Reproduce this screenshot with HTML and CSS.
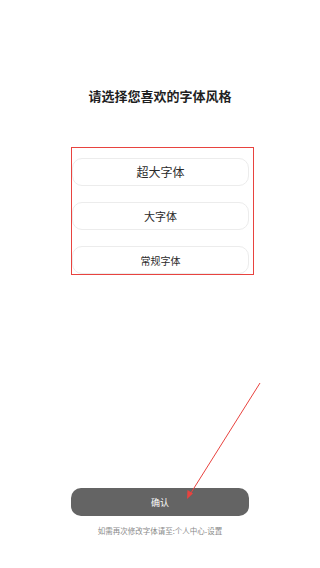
FILE: index.html
```html
<!DOCTYPE html>
<html lang="zh-CN">
<head>
    <meta charset="UTF-8">
    <meta name="viewport" content="width=device-width, initial-scale=1.0">
    <title>字体风格</title>
    <link rel="stylesheet" href="styles.css">
</head>
<body>
    <div class="page">
        <h1 class="title">请选择您喜欢的字体风格</h1>

        <div class="options">
            <button class="option option-xl">超大字体</button>
            <button class="option option-lg">大字体</button>
            <button class="option option-md">常规字体</button>
        </div>

        <button class="confirm">确认</button>
        <p class="tip">如需再次修改字体请至:个人中心-设置</p>

        <!-- annotation arrow -->
        <svg class="arrow" width="320" height="568" viewBox="0 0 320 568">
            <line x1="260" y1="383" x2="189" y2="496" stroke="#e8433f" stroke-width="1"/>
            <polygon points="187,499 187.5,490 193,493.5" fill="#e8433f"/>
        </svg>
    </div>
</body>
</html>
```

FILE: styles.css
```css
* {
    margin: 0;
    padding: 0;
    box-sizing: border-box;
    font-family: "Noto Sans", "Noto Sans CJK SC", sans-serif;
}

body {
    background-color: #ffffff;
}

.page {
    position: relative;
    width: 320px;
    height: 568px;
    display: flex;
    flex-direction: column;
}

.title {
    margin-top: 86px;
    font-size: 13px;
    line-height: 20px;
    font-weight: 600;
    color: #1f1f1f;
    text-align: center;
}

.options {
    margin-top: 41px;
    margin-left: 71px;
    width: 183px;
    border: 1px solid #e8433f;
    padding: 10px 4px 0 0;
    display: flex;
    flex-direction: column;
    gap: 16px;
}

.option {
    height: 28px;
    border: 1px solid #ececec;
    border-radius: 10px;
    background-color: #ffffff;
    color: #2a2a2a;
    cursor: pointer;
}

.option-xl {
    font-size: 12px;
}

.option-lg {
    font-size: 11px;
}

.option-md {
    font-size: 10px;
}

.confirm {
    margin-top: 213px;
    margin-left: 71px;
    width: 178px;
    height: 28px;
    border: none;
    border-radius: 10px;
    background-color: #646464;
    color: #ffffff;
    font-size: 9px;
    cursor: pointer;
}

.tip {
    margin-top: 8px;
    font-size: 7.5px;
    line-height: 14px;
    color: #8a8a8a;
    text-align: center;
}

.arrow {
    position: absolute;
    top: 0;
    left: 0;
    pointer-events: none;
}
```
